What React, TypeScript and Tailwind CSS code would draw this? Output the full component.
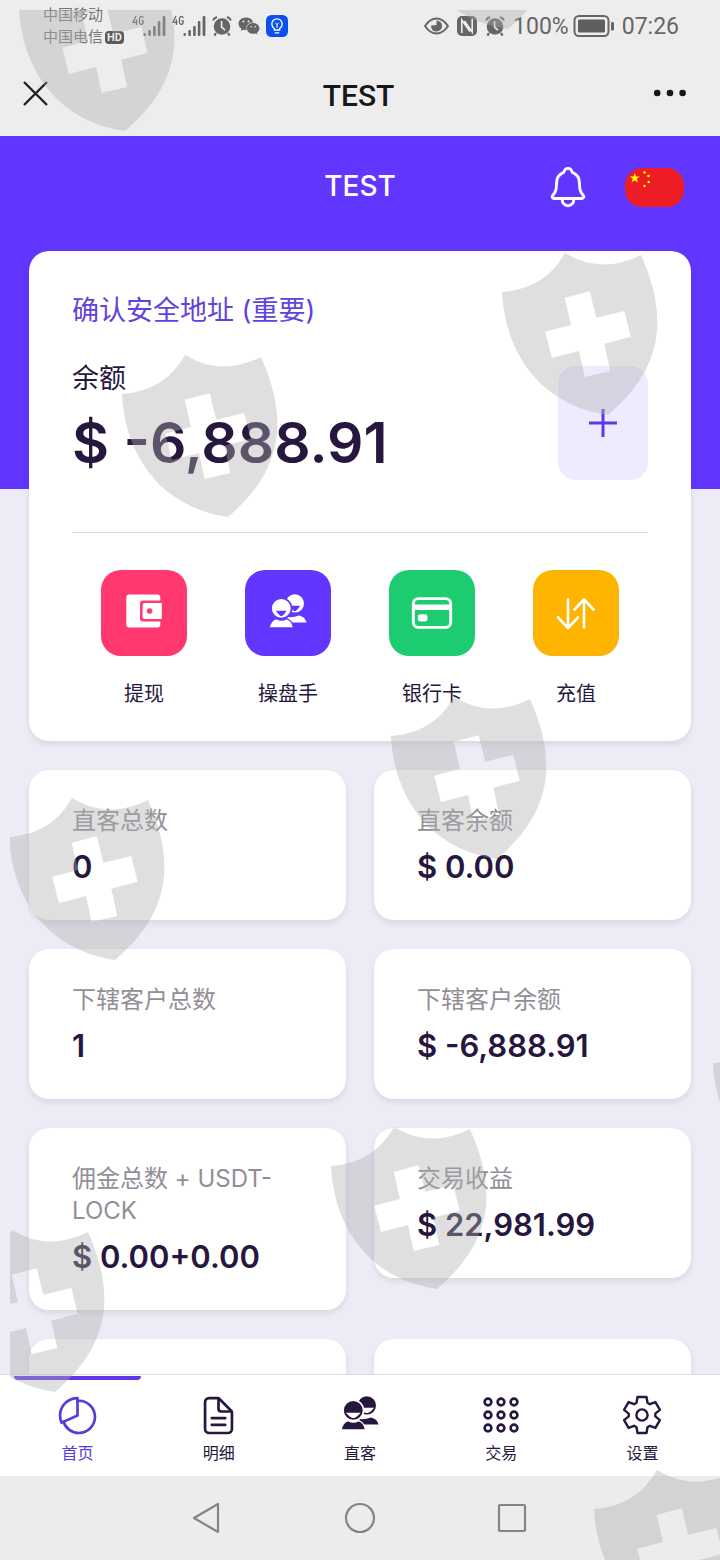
import type { ReactNode } from "react";
import { FaWeixin } from "react-icons/fa";
import {
  IoCardOutline,
  IoDocumentTextOutline,
  IoNotificationsOutline,
  IoPieChartOutline,
} from "react-icons/io5";

const shieldPositions: [number, number][] = [
  [122, 355],
  [502, 253],
  [391, 697],
  [9, 798],
  [331, 1127],
  [713, 1024],
  [594, 1470],
];

const shieldPath =
  "M0 39Q43 36 63 0Q99 22 139 2C167 65 161 115 106 162C38 152 3 100 0 39Z" +
  "M62.7 44.7L69 72L43.3 78.7L50 105L77 98L82.7 124L108.3 118L102.3 90.7L128.7 83.7L122.3 58L94.3 64.7L87.7 38.3Z";

function Shield({ x, y }: { x: number; y: number }) {
  return (
    <path
      d={shieldPath}
      fillRule="evenodd"
      fill="#aeaeae"
      fillOpacity="0.4"
      transform={`translate(${x} ${y})`}
    />
  );
}

function ShieldOverlay() {
  return (
    <svg
      className="pointer-events-none absolute inset-0 z-20 h-full w-full"
      aria-hidden="true"
    >
      <defs>
        <clipPath id="inset">
          <rect x="10" y="10" width="2000" height="3000" />
        </clipPath>
      </defs>
      <g clipPath="url(#inset)">
        <Shield x={19} y={-31} />
        <Shield x={402} y={-133} />
        <Shield x={-51} y={1230} />
        {shieldPositions.map(([x, y]) => (
          <Shield key={`${x}-${y}`} x={x} y={y} />
        ))}
      </g>
    </svg>
  );
}

function Signal() {
  return (
    <svg className="h-[22px] w-[34px]" viewBox="0 0 34 22" fill="#666" aria-hidden="true">
      <g fill="none" stroke="#666" strokeWidth="1.3">
        <path d="M4 1L1 7.3H5.6M4.4 4.5V10" />
        <path d="M11.2 3.2Q10.8 1.4 9.3 1.4Q7.4 1.4 7.4 5.4Q7.4 9.4 9.3 9.4Q11.2 9.4 11.2 7V5.8H9.4" />
      </g>
      <rect x="11.5" y="18" width="2.4" height="3" rx="1" />
      <rect x="16.3" y="15" width="2.6" height="6" rx="1" />
      <rect x="21.1" y="11" width="2.6" height="10" rx="1" />
      <rect x="25.8" y="6" width="2.6" height="15" rx="1" />
      <rect x="30.6" y="1" width="2.8" height="20" rx="1" />
    </svg>
  );
}

function Alarm() {
  return (
    <svg className="h-[22px] w-[20px]" viewBox="0 0 20 22" aria-hidden="true">
      <circle cx="10" cy="11.5" r="8.3" fill="#666" />
      <path d="M1 5.5Q2 3 5 2M19 5.5Q18 3 15 2" stroke="#666" strokeWidth="2" fill="none" />
      <path d="M4 18L2.4 20.6M16 18L17.6 20.6" stroke="#666" strokeWidth="2.2" />
      <path d="M9.6 6V12.2L13 15.2" stroke="#ededed" strokeWidth="1.6" fill="none" />
    </svg>
  );
}

function StatusBar() {
  return (
    <div className="flex h-[52px] shrink-0 items-center justify-between pr-[41px] pl-[43px] font-[Roboto,'Noto_Sans_CJK_SC',sans-serif] text-[#666]">
      <div className="flex items-center">
        <div className="flex w-[89px] flex-col text-[15px] leading-[22px] text-[#777]">
          <span>中国移动</span>
          <span className="flex items-center gap-[2px]">
            中国电信
            <span className="rounded-[4px] bg-[#5a5a5a] px-[2px] text-[11px] leading-[13px] font-bold text-[#ededed]">
              HD
            </span>
          </span>
        </div>
        <div className="flex items-center gap-[6px]">
          <Signal />
          <Signal />
          <Alarm />
          <FaWeixin className="h-[22px] w-[22px]" />
          <svg className="h-[22px] w-[22px]" viewBox="0 0 22 22" aria-hidden="true">
            <rect width="22" height="22" rx="5.5" fill="#0a50f0" />
            <g fill="none" stroke="#fff" strokeWidth="1.3">
              <path d="M8.3 15V13.5Q5.8 11.8 5.8 9A5.2 5.2 0 0 1 16.2 9Q16.2 11.8 13.7 13.5V15ZM8.8 17.8H13.2" />
              <path d="M11 13V9.5M9.2 8L11 9.6L12.8 8" strokeWidth="1" />
            </g>
          </svg>
        </div>
      </div>
      <div className="flex items-center text-[23px]">
        <svg className="h-[20px] w-[25px]" viewBox="0 0 25 20" aria-hidden="true">
          <path
            d="M1 10Q6 2.5 12.5 2.5T24 10Q19 17.5 12.5 17.5T1 10Z"
            fill="none"
            stroke="#666"
            strokeWidth="2"
          />
          <path d="M12.5 4.5V9L7 9.5Q7 15.5 12.7 15.5A5.5 5.5 0 0 0 12.5 4.5Z" fill="#666" />
        </svg>
        <svg className="ml-2 h-[20px] w-[20px]" viewBox="0 0 20 20" aria-hidden="true">
          <rect width="20" height="20" rx="5" fill="#666" />
          <path d="M4.8 17V4L13 15.5M7.5 5L15.2 16V3" stroke="#ededed" strokeWidth="1.6" fill="none" />
        </svg>
        <span className="ml-2 flex">
          <Alarm />
        </span>
        <span className="ml-2 pt-[2px]">100%</span>
        <svg className="ml-1 h-[22px] w-[42px]" viewBox="0 0 42 22" aria-hidden="true">
          <rect x="1.5" y="1" width="34" height="20" rx="4.5" fill="none" stroke="#666" strokeWidth="2" />
          <rect x="5" y="4.5" width="27" height="13" rx="1.5" fill="#5e5e5e" />
          <rect x="38" y="7" width="3" height="8.5" rx="1.2" fill="#666" />
        </svg>
        <span className="ml-[7px] pt-[2px]">07:26</span>
      </div>
    </div>
  );
}

function TitleBar() {
  return (
    <div className="flex h-[84px] shrink-0 items-center justify-between pr-[33px] pb-[2px] pl-[22px]">
      <button aria-label="关闭" className="flex w-[34px]">
        <svg className="h-[27px] w-[27px]" viewBox="0 0 27 27" aria-hidden="true">
          <path d="M2 2L25 25M25 2L2 25" stroke="#222" strokeWidth="2.4" />
        </svg>
      </button>
      <h1 className="pt-1 pl-2 font-[Roboto,sans-serif] text-[30px] font-medium text-[#171717]">
        TEST
      </h1>
      <button aria-label="更多" className="flex w-[34px]">
        <svg className="h-[8px] w-[34px]" viewBox="0 0 34 8" fill="#171717" aria-hidden="true">
          <circle cx="4.2" cy="4" r="3.3" />
          <circle cx="17" cy="4" r="3.3" />
          <circle cx="29.6" cy="4" r="3.3" />
        </svg>
      </button>
    </div>
  );
}

function Flag() {
  return (
    <svg className="h-[39px] w-[59px]" viewBox="0 0 59 39" aria-hidden="true">
      <rect width="59" height="39" rx="17" fill="#ee1c25" />
      <g fill="#ff0">
        <path d="M9.8 5L11.1 8.6H14.8L11.8 10.8L12.9 14.4L9.8 12.2L6.6 14.4L7.8 10.8L4.8 8.6H8.4Z" />
        <circle cx="19.5" cy="4.5" r="1.3" />
        <circle cx="23.5" cy="8" r="1.3" />
        <circle cx="23.8" cy="14" r="1.3" />
        <circle cx="19.5" cy="18" r="1.3" />
      </g>
    </svg>
  );
}

function WalletIcon() {
  return (
    <svg className="h-10 w-10" viewBox="0 0 40 40" aria-hidden="true">
      <rect x="2.3" y="1.5" width="34" height="33" rx="3" fill="#fff" />
      <path d="M40 7.5H19Q16 7.5 16 10.5V25.5Q16 28.5 19 28.5H40Z" fill="#ff396f" />
      <path d="M37.8 10H20.5Q18.6 10 18.6 12V24Q18.6 26 20.5 26H37.8Z" fill="#fff" />
      <circle cx="25.6" cy="18" r="2.8" fill="#ff396f" />
    </svg>
  );
}

function PeopleIcon({ color, gap, wide }: { color: string; gap: string; wide?: boolean }) {
  const r = wide ? 7.4 : 5.4;
  return (
    <svg className="h-10 w-10" viewBox="0 0 40 40" aria-hidden="true">
      <path d="M21 29.4L19 24Q26 24.6 31 22.4Q37 23.6 38.5 29.4Z" fill={color} />
      <circle cx="26.8" cy="10.4" r="9.2" fill={color} />
      <path d={`M${26.8 - r} 12.8H${26.8 + r}Q${26.1 + r / 2} 18.2 26.8 18Q${27.4 - r / 2} 18.2 ${26.8 - r} 12.8Z`} fill={gap} />
      <path d="M1 35Q2.5 27 8.5 25.6Q13.3 28.6 18.4 25.6Q24 27 25.6 35Z" fill={color} stroke={gap} strokeWidth="1.4" />
      <circle cx="13.3" cy="15.4" r="10.2" fill={color} stroke={gap} strokeWidth="1.6" />
      <path d={`M${13.3 - r} 17.8H${13.3 + r}Q${12.3 + r / 2} 23.2 13.3 23Q${14.3 - r / 2} 23.2 ${13.3 - r} 17.8Z`} fill={gap} />
    </svg>
  );
}

function SwapIcon() {
  return (
    <svg
      className="h-10 w-10"
      viewBox="0 0 40 40"
      fill="none"
      stroke="#fff"
      strokeWidth="2.6"
      strokeLinecap="round"
      strokeLinejoin="round"
      aria-hidden="true"
    >
      <path d="M12 6.5V35M2 24.5L12 35L22 24.5" />
      <path d="M28 34.5V6.5M18.5 16.5L28 6.5L37.5 16.5" />
    </svg>
  );
}

function DotsIcon() {
  return (
    <svg
      className="h-10 w-10"
      viewBox="0 0 40 40"
      fill="none"
      stroke="currentColor"
      strokeWidth="2.6"
      aria-hidden="true"
    >
      {[7, 20, 33].map((y) =>
        [7, 20, 33].map((x) => <circle key={`${x}-${y}`} cx={x} cy={y} r="3.4" />),
      )}
    </svg>
  );
}

const gearPath = (() => {
  const points: string[] = [];
  const add = (radius: number, degrees: number) => {
    const a = (degrees * Math.PI) / 180;
    points.push(`${(20 + radius * Math.cos(a)).toFixed(1)} ${(20 + radius * Math.sin(a)).toFixed(1)}`);
  };
  for (let tooth = 0; tooth < 6; tooth++) {
    const mid = tooth * 60 - 90;
    add(13.4, mid - 24);
    add(18.6, mid - 14);
    add(18.6, mid + 14);
    add(13.4, mid + 24);
  }
  return `M${points.join("L")}Z`;
})();

function GearIcon() {
  return (
    <svg
      className="h-10 w-10"
      viewBox="0 0 40 40"
      fill="none"
      stroke="currentColor"
      strokeWidth="2.4"
      strokeLinejoin="round"
      aria-hidden="true"
    >
      <path d={gearPath} />
      <circle cx="20" cy="20" r="5.6" />
    </svg>
  );
}

function BalanceCard() {
  const actions: { label: string; tile: string; icon: ReactNode }[] = [
    { label: "提现", tile: "bg-[#ff396f]", icon: <WalletIcon /> },
    { label: "操盘手", tile: "bg-[#6236ff]", icon: <PeopleIcon color="#fff" gap="#6236ff" /> },
    {
      label: "银行卡",
      tile: "bg-[#1dcc70]",
      icon: <IoCardOutline className="h-[46px] w-[46px] text-white" />,
    },
    { label: "充值", tile: "bg-[#ffb400]", icon: <SwapIcon /> },
  ];
  return (
    <section className="rounded-[20px] bg-white px-[43px] pt-[40px] pb-[32px] shadow-[0_3px_6px_rgba(0,0,0,0.09)]">
      <a href="#address" className="block text-[27px] leading-[40px] text-[#6043dc]">
        确认安全地址 (重要)
      </a>
      <div className="mt-[35px] flex items-start justify-between">
        <div className="mt-[-7px]">
          <p className="text-[27px] leading-[40px]">余额</p>
          <p className="mt-[6px] text-[57px] leading-[76px] font-semibold">$ -6,888.91</p>
        </div>
        <button
          aria-label="添加"
          className="flex h-[114px] w-[90px] items-center justify-center rounded-[18px] bg-[#efebff]"
        >
          <svg className="h-[30px] w-[30px]" viewBox="0 0 30 30" aria-hidden="true">
            <path d="M15 1V29M1 15H29" stroke="#6236e8" strokeWidth="3" />
          </svg>
        </button>
      </div>
      <div className="mt-[51px] grid grid-cols-4 border-t border-[#dcdce4] pt-[37px]">
        {actions.map((action) => (
          <a key={action.label} href="#action" className="flex flex-col items-center">
            <span
              className={`flex h-[86px] w-[86px] items-center justify-center rounded-[20px] ${action.tile}`}
            >
              {action.icon}
            </span>
            <span className="mt-[23px] text-[20px] leading-[30px]">{action.label}</span>
          </a>
        ))}
      </div>
    </section>
  );
}

const stats: [string, string][] = [
  ["直客总数", "0"],
  ["直客余额", "$ 0.00"],
  ["下辖客户总数", "1"],
  ["下辖客户余额", "$ -6,888.91"],
  ["佣金总数 + USDT-LOCK", "$ 0.00+0.00"],
  ["交易收益", "$ 22,981.99"],
  ["", ""],
  ["", ""],
];

function TabBar() {
  const tabs: { label: string; icon: ReactNode }[] = [
    { label: "首页", icon: <IoPieChartOutline className="h-[43px] w-[43px]" /> },
    { label: "明细", icon: <IoDocumentTextOutline className="h-[43px] w-[43px]" /> },
    { label: "直客", icon: <PeopleIcon color="#27173e" gap="#fff" wide /> },
    { label: "交易", icon: <DotsIcon /> },
    { label: "设置", icon: <GearIcon /> },
  ];
  return (
    <nav className="grid h-[102px] shrink-0 grid-cols-5 border-t border-[#dcdbe6] bg-white px-[7px]">
      {tabs.map((tab, index) => (
        <a
          key={tab.label}
          href="#tab"
          className={`relative flex flex-col items-center pt-[18px] ${index === 0 ? "text-[#5a39dc]" : "text-[#27173e]"}`}
        >
          {index === 0 && (
            <span className="absolute inset-x-[7px] top-px h-1 rounded-b-[4px] bg-[#6236e8]" />
          )}
          <span className="flex h-[44px] items-center">{tab.icon}</span>
          <span className="mt-[4px] text-[16px] leading-[24px]">{tab.label}</span>
        </a>
      ))}
    </nav>
  );
}

function SystemNav() {
  return (
    <div className="flex h-[84px] shrink-0 items-center justify-center bg-[#ececec]">
      {[
        <path key="back" d="M28 3V31L4 17Z" />,
        <circle key="home" cx="17" cy="17" r="14" />,
        <rect key="recent" x="3" y="4" width="26" height="26" rx="1" />,
      ].map((shape, index) => (
        <button
          key={index}
          aria-label={["返回", "主屏幕", "最近任务"][index]}
          className="flex w-[153px] justify-center"
        >
          <svg
            className="h-[34px] w-[34px]"
            viewBox="0 0 34 34"
            fill="none"
            stroke="#858585"
            strokeWidth="2.2"
            strokeLinejoin="round"
            aria-hidden="true"
          >
            {shape}
          </svg>
        </button>
      ))}
    </div>
  );
}

export default function App() {
  return (
    <div className="relative flex h-screen flex-col overflow-hidden bg-[#ededed] font-[Inter,'Noto_Sans_CJK_SC',sans-serif] text-[#27173e]">
      <StatusBar />
      <TitleBar />
      <main className="flex-1 overflow-hidden bg-[#edebf5]">
        <header className="grid grid-cols-3 items-start bg-[#6236ff] px-9 pt-[28px] pb-[279px]">
          <h2 className="col-start-2 text-center text-[28px] leading-[44px] font-medium text-white">
            TEST
          </h2>
          <div className="flex h-[46px] items-center justify-end gap-[34px]">
            <button aria-label="通知">
              <IoNotificationsOutline className="h-[46px] w-[46px] text-white" />
            </button>
            <button aria-label="语言">
              <Flag />
            </button>
          </div>
        </header>
        <div className="mt-[-238px] flex flex-col gap-[29px] px-[29px]">
          <BalanceCard />
          <div className="grid grid-cols-2 items-start gap-x-[28px] gap-y-[29px]">
            {stats.map(([label, value], index) => (
              <section
                key={index}
                className="min-h-[150px] rounded-[20px] bg-white px-[43px] pt-[35px] pb-[31px] shadow-[0_3px_6px_rgba(0,0,0,0.09)]"
              >
                <h3 className="text-[24px] leading-[32px] text-[#928e98]">{label}</h3>
                <p className="mt-2 text-[31px] leading-[44px] font-semibold">{value}</p>
              </section>
            ))}
          </div>
        </div>
      </main>
      <TabBar />
      <SystemNav />
      <ShieldOverlay />
    </div>
  );
}
